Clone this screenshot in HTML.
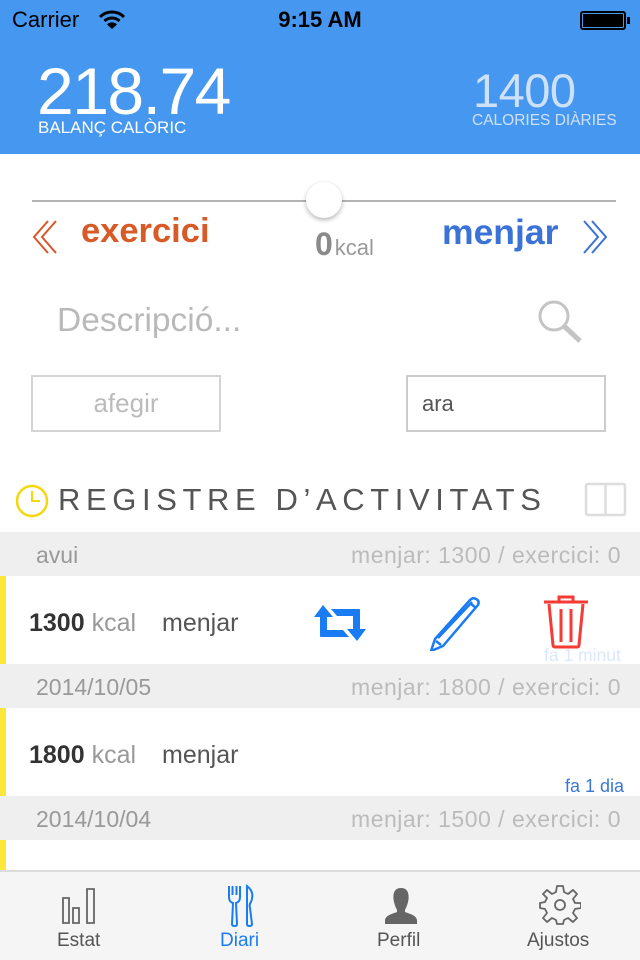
<!DOCTYPE html>
<html><head><meta charset="utf-8"><style>
*{margin:0;padding:0;box-sizing:border-box}
body{width:640px;height:960px;overflow:hidden;background:#fff;font-family:"Liberation Sans",sans-serif;position:relative}
.a{position:absolute;white-space:nowrap}
</style></head><body>
<div class="a" style="left:0;top:0;width:640px;height:154px;background:#4697ef"></div>
<div class="a" style="left:12px;top:7px;font-size:22px;color:#000">Carrier</div>
<svg class="a" style="left:98px;top:10px" width="28" height="20" viewBox="0 0 28 20"><path d="M2 7 A17 17 0 0 1 26 7" stroke="#000" stroke-width="3" fill="none"/><path d="M6.5 11 A11 11 0 0 1 21.5 11" stroke="#000" stroke-width="3" fill="none"/><path d="M14 19 L9 14.5 A7 7 0 0 1 19 14.5Z" fill="#000"/></svg>
<div class="a" style="left:0;width:640px;text-align:center;top:7px;font-size:22px;font-weight:bold;color:#000">9:15 AM</div>
<div class="a" style="left:580px;top:11px;width:46px;height:19px;border:2px solid #000;border-radius:3px;padding:1px"><div style="width:100%;height:100%;background:#000"></div></div>
<div class="a" style="left:627px;top:17px;width:3px;height:7px;background:#000"></div>
<div class="a" style="left:37px;top:53px;font-size:66px;color:#fff;letter-spacing:-1.5px">218.74</div>
<div class="a" style="left:38px;top:118px;font-size:17px;color:#fff">BALANÇ CALÒRIC</div>
<div class="a" style="left:473px;top:63px;font-size:47px;color:#cfe1f9;letter-spacing:-0.5px">1400</div>
<div class="a" style="left:472px;top:112px;font-size:15.5px;color:#cfe1f9">CALORIES DIÀRIES</div>

<div class="a" style="left:32px;top:200px;width:584px;height:2px;background:#b3b3b3"></div>
<div class="a" style="left:306px;top:182px;width:36px;height:36px;border-radius:50%;background:#fff;box-shadow:0 2px 5px rgba(0,0,0,.3)"></div>
<svg class="a" style="left:32px;top:219px" width="28" height="36" viewBox="0 0 28 36"><path d="M16 2 L2 18 L16 34 M24 2 L10 18 L24 34" stroke="#d9562a" stroke-width="2" fill="none"/></svg>
<div class="a" style="left:81px;top:212px;font-size:34.5px;font-weight:bold;color:#d85a27">exercici</div>
<div class="a" style="left:315px;top:226px;font-size:32px;font-weight:bold;color:#8a8a8a">0<span style="font-size:22px;font-weight:normal;color:#999;margin-left:2px">kcal</span></div>
<div class="a" style="left:442px;top:212px;font-size:35.5px;font-weight:bold;color:#3a72d8">menjar</div>
<svg class="a" style="left:580px;top:219px" width="28" height="36" viewBox="0 0 28 36"><path d="M4 2 L18 18 L4 34 M12 2 L26 18 L12 34" stroke="#3a72d8" stroke-width="2" fill="none"/></svg>

<div class="a" style="left:57px;top:302px;font-size:33.5px;color:#b9b9b9">Descripció...</div>
<svg class="a" style="left:536px;top:298px" width="48" height="46" viewBox="0 0 48 46"><circle cx="18" cy="18" r="14" stroke="#c4c4c4" stroke-width="3" fill="none"/><path d="M28 28 L44 43" stroke="#c4c4c4" stroke-width="5"/></svg>
<div class="a" style="left:31px;top:375px;width:190px;height:57px;border:2px solid #d4d4d4;text-align:center;line-height:53px;font-size:26px;color:#bbb">afegir</div>
<div class="a" style="left:406px;top:375px;width:200px;height:57px;border:2px solid #ccc;line-height:53px;padding-left:14px;font-size:22px;color:#555">ara</div>

<svg class="a" style="left:15px;top:484px" width="34" height="34" viewBox="0 0 34 34"><circle cx="17" cy="17" r="15" stroke="#f6d70d" stroke-width="2.5" fill="none"/><path d="M17 7 V17 H25" stroke="#f6d70d" stroke-width="2" fill="none"/></svg>
<div class="a" style="left:58px;top:482px;font-size:31px;color:#555;letter-spacing:5.6px">REGISTRE D’ACTIVITATS</div>
<svg class="a" style="left:583px;top:482px" width="45" height="36" viewBox="0 0 45 36"><path d="M3 4 Q3 2 5 2 H40 Q42 2 42 4 V31 Q42 33 40 33 H5 Q3 33 3 31Z M22.5 2 V33" stroke="#ddd" stroke-width="2.5" fill="none"/></svg>

<div class="a" style="left:0;top:532px;width:640px;height:44px;background:#efefef"></div>
<div class="a" style="left:36px;top:542px;font-size:23px;color:#999">avui</div>
<div class="a" style="right:19px;top:542px;font-size:23px;color:#bbb;letter-spacing:0.5px">menjar: 1300 / exercici: 0</div>
<div class="a" style="left:0;top:576px;width:6px;height:88px;background:#fde73d"></div>
<div class="a" style="left:29px;top:609px;font-size:25px;color:#333"><b>1300</b> <span style="color:#999">kcal</span><span style="color:#555;margin-left:26px">menjar</span></div>
<svg class="a" style="left:313px;top:605px" width="54" height="36" viewBox="0 0 54 36"><path d="M10 0 L20 12 H14 V25 H30 L36 32 H8 Q7 32 7 31 V12 H1Z M44 36 L34 24 H40 V11 H24 L18 4 H46 Q47 4 47 5 V24 H53Z" fill="#1a7cf5"/></svg>
<svg class="a" style="left:426px;top:597px" width="56" height="54" viewBox="0 0 56 54"><path d="M50 2 Q54 4 52 8 L17 49 L5 54 L9 42 L44 3 Q47 0 50 2Z M44 6 L50 11 M10 44 L15 48 M12 41 L46 5" stroke="#1a7cf5" stroke-width="2.5" fill="none" stroke-linejoin="round"/></svg>
<svg class="a" style="left:543px;top:595px" width="46" height="54" viewBox="0 0 46 54"><path d="M1 7 H45 M16 7 V2 H30 V7 M6 9 L10 50 Q10 52 12 52 H34 Q36 52 36 50 L40 9 M18 14 V47 M28 14 V47" stroke="#f53b33" stroke-width="3" fill="none"/></svg>
<div class="a" style="left:544px;top:645px;font-size:17.5px;color:#dbe8fb">fa 1 minut</div>

<div class="a" style="left:0;top:664px;width:640px;height:44px;background:#efefef"></div>
<div class="a" style="left:36px;top:674px;font-size:23px;color:#999">2014/10/05</div>
<div class="a" style="right:19px;top:674px;font-size:23px;color:#bbb;letter-spacing:0.5px">menjar: 1800 / exercici: 0</div>
<div class="a" style="left:0;top:708px;width:6px;height:88px;background:#fde73d"></div>
<div class="a" style="left:29px;top:741px;font-size:25px;color:#333"><b>1800</b> <span style="color:#999">kcal</span><span style="color:#555;margin-left:26px">menjar</span></div>
<div class="a" style="left:565px;top:776px;font-size:18px;color:#3a78d8">fa 1 dia</div>

<div class="a" style="left:0;top:796px;width:640px;height:44px;background:#efefef"></div>
<div class="a" style="left:36px;top:806px;font-size:23px;color:#999">2014/10/04</div>
<div class="a" style="right:19px;top:806px;font-size:23px;color:#bbb;letter-spacing:0.5px">menjar: 1500 / exercici: 0</div>
<div class="a" style="left:0;top:840px;width:6px;height:30px;background:#fde73d"></div>

<div class="a" style="left:0;top:870px;width:640px;height:90px;background:#f5f5f5;border-top:2px solid #dcdcdc"></div>
<svg class="a" style="left:61px;top:887px" width="40" height="38" viewBox="0 0 40 38"><path d="M2 11 H8 V36 H2Z M12 21 H18 V36 H12Z M26 2 H33 V36 H26Z" stroke="#666" stroke-width="1.8" fill="none"/></svg>
<div class="a" style="left:57px;top:930px;font-size:19px;color:#555">Estat</div>
<svg class="a" style="left:226px;top:884px" width="30" height="44" viewBox="0 0 30 44"><path d="M3 2 V13 Q3 18 7 19 L6 40 Q6 42 8.5 42 Q11 42 11 40 L10 19 Q14 18 14 13 V2 M6.5 2 V11 M10.5 2 V11 M21 2 Q29 8 25 18 Q23 20 24 24 L26 40 Q26 42 23.5 42 Q21 42 21 40Z" stroke="#1a7cf5" stroke-width="2" fill="none"/></svg>
<div class="a" style="left:220px;top:930px;font-size:19px;color:#1a7cf5">Diari</div>
<svg class="a" style="left:383px;top:886px" width="36" height="40" viewBox="0 0 36 40"><path d="M18 2 C11 2 10 8 10.5 13 C11 18 13 22 14 24 L14 26 C9 28 3 29 2 34 V38 H34 V34 C33 29 27 28 22 26 L22 24 C23 22 25 18 25.5 13 C26 8 25 2 18 2Z" fill="#666"/></svg>
<div class="a" style="left:377px;top:930px;font-size:19px;color:#555">Perfil</div>
<svg class="a" style="left:539px;top:884px" width="42" height="42" viewBox="0 0 42 42"><path d="M18 2 H24 L25 8 L29 10 L34 6 L38 10 L34 15 L36 19 L42 19 V24 L36 25 L34 29 L38 34 L34 38 L29 34 L25 36 L24 40 H18 L17 36 L13 34 L8 38 L4 34 L8 29 L6 25 L1 24 V19 L6 18 L8 14 L4 10 L8 6 L13 10 L17 8Z" stroke="#666" stroke-width="1.8" fill="none" stroke-linejoin="round"/><circle cx="21" cy="21" r="5" stroke="#666" stroke-width="1.8" fill="none"/></svg>
<div class="a" style="left:527px;top:930px;font-size:19px;color:#555">Ajustos</div>
</body></html>
